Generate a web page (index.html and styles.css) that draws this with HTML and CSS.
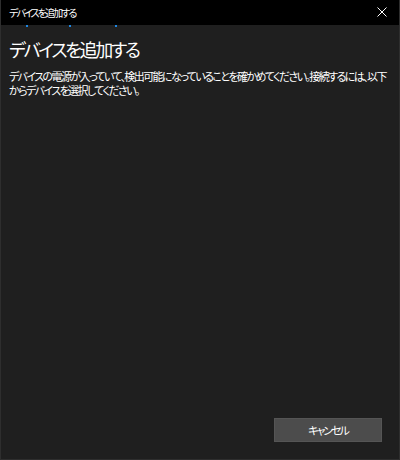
FILE: index.html
```html
<!DOCTYPE html>
<html lang="ja">
<head>
<meta charset="utf-8">
<title>デバイスを追加する</title>
<link rel="stylesheet" href="styles.css">
</head>
<body>
<div class="window">
  <div class="titlebar">
    <span class="title">デバイスを追加する</span>
    <span class="close" aria-label="閉じる">
      <svg width="10" height="10" viewBox="0 0 10 10"><path d="M0.5 0.5 L9.5 9.5 M9.5 0.5 L0.5 9.5" stroke="#ffffff" stroke-width="1" fill="none"/></svg>
    </span>
  </div>
  <div class="progress">
    <span class="dot d1"></span>
    <span class="dot d2"></span>
    <span class="dot d3"></span>
  </div>
  <div class="content">
    <h1 class="heading">デバイスを追加する</h1>
    <p class="desc">デバイスの電源が入っていて、検出可能になっていることを確かめてください。接続するには、以下からデバイスを選択してください。</p>
  </div>
  <div class="footer">
    <button class="btn">キャンセル</button>
  </div>
</div>
</body>
</html>
```
FILE: styles.css
```css
html, body {
  margin: 0;
  padding: 0;
  background: #1f1f1f;
}
body {
  font-family: "Noto Sans CJK JP", "Noto Sans", sans-serif;
  font-feature-settings: "palt";
  color: #ffffff;
}
.window {
  width: 400px;
  height: 460px;
  box-sizing: border-box;
  border: 1px solid #2e2e2e;
  border-top: none;
  display: flex;
  flex-direction: column;
  background: #1f1f1f;
}
.titlebar {
  height: 25px;
  background: #000000;
  display: flex;
  align-items: center;
  justify-content: space-between;
  padding-left: 8px;
  padding-right: 12px;
  flex: none;
}
.title {
  font-size: 10px;
  letter-spacing: -1.9px;
  line-height: 14px;
  color: #ffffff;
}
.close {
  display: flex;
  width: 10px;
  height: 10px;
  margin-top: -1px;
}
.progress {
  position: relative;
  height: 2px;
  flex: none;
}
.dot {
  position: absolute;
  top: 0;
  width: 2px;
  height: 2px;
  background: #1e86e0;
}
.d1 { left: 25px; }
.d2 { left: 68px; }
.d3 { left: 114px; }
.content {
  flex: 1;
  padding: 0 8px;
}
.heading {
  margin: 10px 0 0 0;
  font-size: 18px;
  letter-spacing: -2.3px;
  line-height: 24px;
  font-weight: 400;
  color: #ffffff;
}
.desc {
  margin: 8px 0 0 0;
  font-size: 11px;
  letter-spacing: -1.6px;
  line-height: 14px;
  color: #ffffff;
}
.footer {
  display: flex;
  justify-content: flex-end;
  padding: 0 17px 17px 0;
  flex: none;
}
.btn {
  width: 108px;
  height: 24px;
  background: #4c4c4c;
  border: 1px solid #555555;
  color: #ffffff;
  font-family: "Noto Sans CJK JP", "Noto Sans", sans-serif;
  font-feature-settings: "palt";
  font-size: 11px;
  letter-spacing: -2px;
  line-height: 14px;
  padding: 0;
}
```
